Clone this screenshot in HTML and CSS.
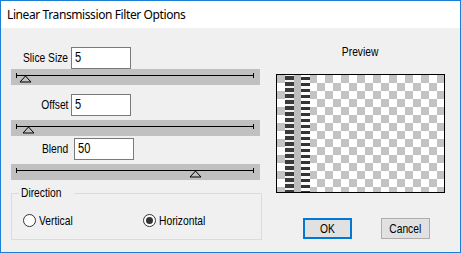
FILE: index.html
```html
<!DOCTYPE html>
<html>
<head>
<meta charset="utf-8">
<link rel="stylesheet" href="styles.css">
</head>
<body>
<div class="window">
  <div class="titlebar">Linear Transmission Filter Options</div>
  <div class="content">
    <div class="left">
      <div class="field first">
        <label class="lbl w60 pr5"><span class="n nr">Slice Size</span></label>
        <div class="input"><span class="n nl">5</span></div>
      </div>
      <div class="slider">
        <div class="line"></div>
        <svg class="thumb" style="left:8px" width="13" height="8" viewBox="0 0 13 8"><path d="M6.5 1 L12 7 L1 7 Z" fill="none" stroke="#000" stroke-width="1"/></svg>
      </div>
      <div class="field second">
        <label class="lbl w60 pr3"><span class="n nr">Offset</span></label>
        <div class="input"><span class="n nl">5</span></div>
      </div>
      <div class="slider s2">
        <div class="line"></div>
        <svg class="thumb" style="left:11px" width="13" height="8" viewBox="0 0 13 8"><path d="M6.5 1 L12 7 L1 7 Z" fill="none" stroke="#000" stroke-width="1"/></svg>
      </div>
      <div class="field third">
        <label class="lbl w63 pr6"><span class="n nr">Blend</span></label>
        <div class="input"><span class="n nl">50</span></div>
      </div>
      <div class="slider s3">
        <div class="line"></div>
        <svg class="thumb" style="left:178px" width="13" height="8" viewBox="0 0 13 8"><path d="M6.5 1 L12 7 L1 7 Z" fill="none" stroke="#000" stroke-width="1"/></svg>
      </div>
      <fieldset class="group">
        <legend><span class="n nl">Direction</span></legend>
        <div class="radios">
          <label class="radio"><span class="circle"></span><span class="n nl">Vertical</span></label>
          <label class="radio checked"><span class="circle"><span class="dot"></span></span><span class="n nl">Horizontal</span></label>
        </div>
      </fieldset>
    </div>
    <div class="right">
      <div class="preview-label"><span class="n nc">Preview</span></div>
      <div class="preview">
        <div class="stripe a"></div>
        <div class="mid"></div>
        <div class="stripe b"></div>
      </div>
      <div class="buttons">
        <div class="btn ok"><span class="n nc">OK</span></div>
        <div class="btn"><span class="n nc">Cancel</span></div>
      </div>
    </div>
  </div>
</div>
</body>
</html>
```
FILE: styles.css
```css
html, body { margin: 0; padding: 0; background: #fff; }
.window {
  width: 461px; height: 253px; box-sizing: border-box;
  border: 1px solid #1c7fd6; background: #f0f0f0;
  display: flex; flex-direction: column; overflow: hidden;
  font-family: "Liberation Sans", Arial, sans-serif;
  font-size: 13px; color: #000;
}
.n { display: inline-block; white-space: nowrap; transform: scaleX(0.79); }
.nl { transform-origin: left center; }
.nr { transform-origin: right center; }
.nc { transform-origin: center center; }
.titlebar {
  height: 27px; flex: none; background: #fff;
  font-family: "Noto Sans", "Open Sans", sans-serif; font-size: 12px;
  letter-spacing: -0.4px;
  line-height: 27px; padding-left: 6px; color: #000;
}
.content { flex: 1; display: flex; }
.left { width: 251px; margin-left: 10px; display: flex; flex-direction: column; }
.field { display: flex; align-items: center; height: 22px; }
.field.first { margin-top: 19px; }
.field.second { margin-top: 9px; }
.field.third { margin-top: 2px; }
.lbl { text-align: right; box-sizing: border-box; line-height: 22px; white-space: nowrap; }
.w60 { width: 60px; }
.w63 { width: 63px; }
.pr5 { padding-right: 5px; }
.pr3 { padding-right: 3px; }
.pr6 { padding-right: 6px; }
.input {
  width: 60px; height: 22px; box-sizing: border-box;
  border: 1px solid #7a7a7a; background: #fff;
  padding-left: 3px; line-height: 19px; font-size: 14px;
}
.slider {
  position: relative; height: 16px; background: #c0c0c0;
  width: 249px; box-sizing: border-box; padding: 6px 6px 0 5px;
}
.slider.s2 { margin-top: 4px; }
.slider.s3 { margin-top: 4px; }
.line { height: 1px; background: #000; position: relative; }
.line::before, .line::after {
  content: ""; position: absolute; top: -2px; width: 1px; height: 5px; background: #000;
}
.line::before { left: 0; }
.line::after { right: 0; }
.thumb { position: absolute; top: 6px; }
.group {
  margin: 6px 0 0 0; padding: 0; height: 54px; box-sizing: border-box;
  border: 1px solid #dcdcdc; width: 251px;
}
.group legend { padding: 0 2px; margin-left: 7px; line-height: 14px; }
.radios { display: flex; margin-top: 13px; padding-left: 11px; }
.radio { display: flex; align-items: center; height: 14px; }
.radio.checked { margin-left: 61px; }
.circle {
  width: 13px; height: 13px; box-sizing: border-box; border-radius: 50%;
  border: 1px solid #333; background: #fff; margin-right: 3px; flex: none;
  display: flex; align-items: center; justify-content: center;
}
.dot { width: 7px; height: 7px; border-radius: 50%; background: #333; }
.right { margin-left: 14px; width: 169px; display: flex; flex-direction: column; }
.preview-label { text-align: center; margin-top: 16px; line-height: 16px; }
.preview {
  margin-top: 14px; width: 169px; height: 119px; box-sizing: border-box;
  border: 1px solid #000; display: flex; padding-left: 8px;
  background-color: #fff;
  background-image:
    linear-gradient(45deg, #c3c3c3 25%, transparent 25%, transparent 75%, #c3c3c3 75%),
    linear-gradient(45deg, #c3c3c3 25%, transparent 25%, transparent 75%, #c3c3c3 75%);
  background-size: 16px 16px;
  background-position: 0 8px, 8px 16px;
}
.stripe { width: 9px; height: 100%; }
.stripe.a { background: repeating-linear-gradient(to bottom, #f2f2f2 0 1px, #3a3a3a 1px 5px, #f2f2f2 5px 6px); }
.mid { width: 7px; height: 100%; background: #bcbcbc; }
.stripe.b { width: 9px;
  background: repeating-linear-gradient(to bottom, #fafafa 0 2px, #333 2px 5px, #fafafa 5px 6px); }
.buttons { display: flex; margin-top: 25px; margin-left: 27px; }
.btn {
  width: 49px; height: 21px; box-sizing: border-box; border: 1px solid #adadad;
  background: #e1e1e1; text-align: center; line-height: 19px;
}
.btn.ok { border: 2px solid #0078d7; line-height: 17px; margin-right: 29px; }
```
